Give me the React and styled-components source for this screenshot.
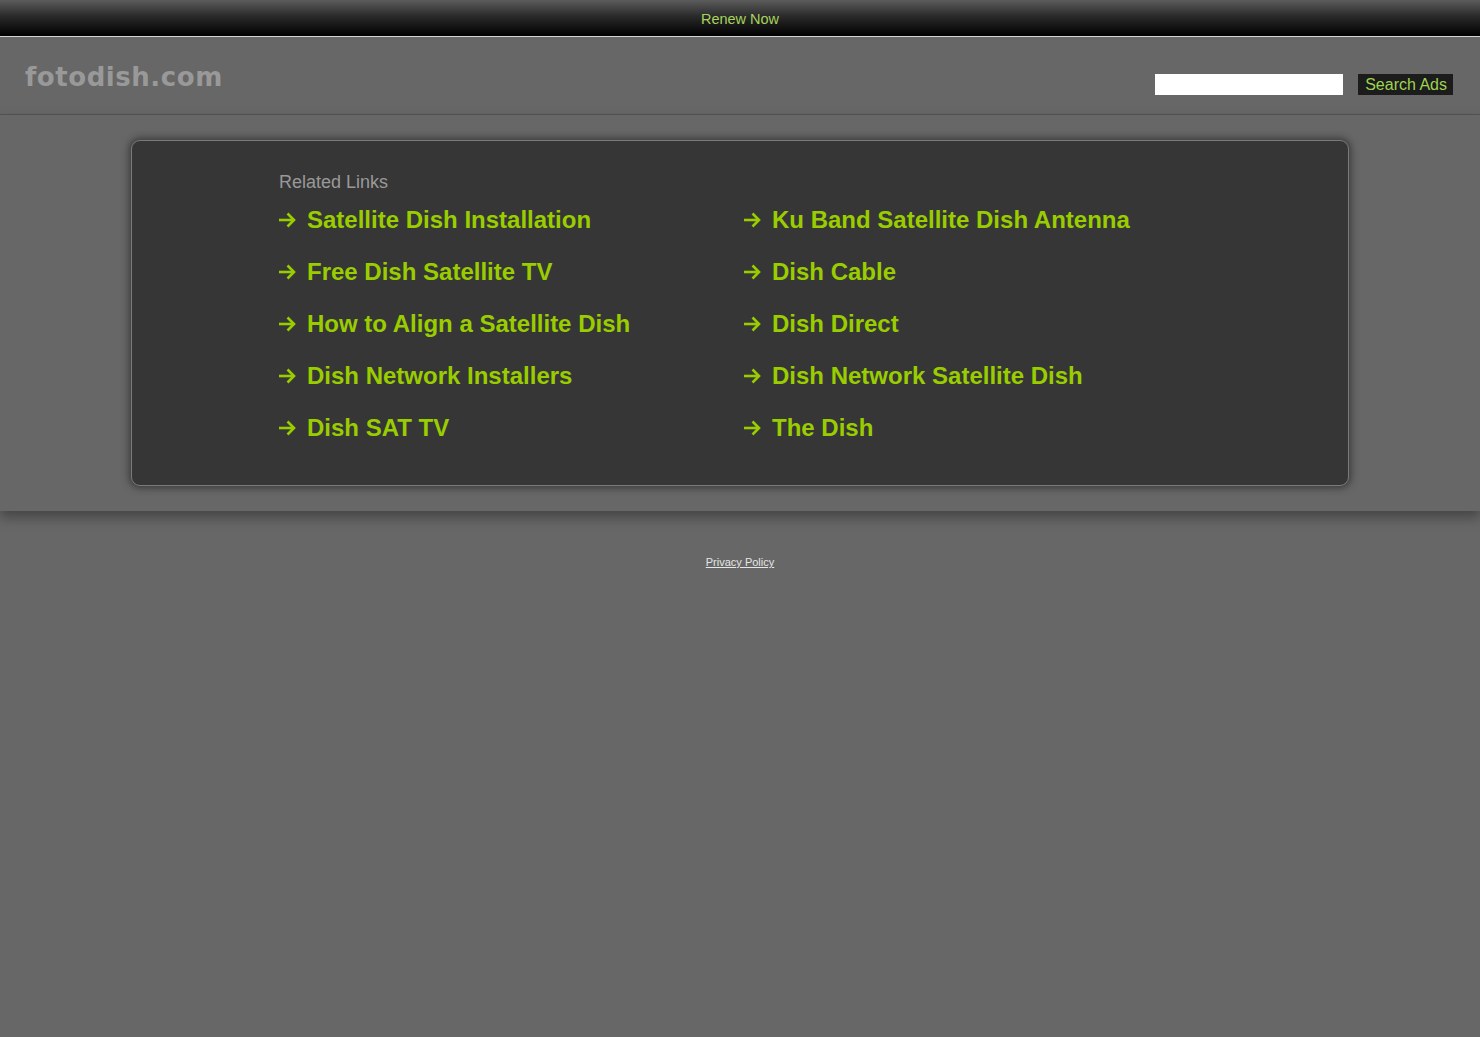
import styled, { createGlobalStyle } from 'styled-components'

const GlobalStyle = createGlobalStyle`
  html, body {
    margin: 0;
    padding: 0;
    background: #676767;
    font-family: "Liberation Sans", Arial, sans-serif;
  }
`

const TopBar = styled.div`
  height: 36px;
  border-bottom: 1px solid #d6d6d6;
  background: linear-gradient(to bottom, #5c5c5c 0%, #2a2a2a 45%, #000 100%);
  display: flex;
  align-items: center;
  justify-content: center;
  a {
    color: #a6d35c;
    font-size: 14.5px;
    text-decoration: none;
    padding-top: 1px;
  }
`

const Header = styled.div`
  height: 77px;
  border-bottom: 1px solid #555;
  background: #676767;
  display: flex;
  align-items: flex-start;
  justify-content: space-between;
  padding: 0 27px 0 25px;
`

const Logo = styled.div`
  font-family: "DejaVu Sans", Verdana, sans-serif;
  font-weight: bold;
  font-size: 26px;
  color: #999;
  margin-top: 25px;
  letter-spacing: 0.55px;
`

const SearchForm = styled.form`
  display: flex;
  align-items: center;
  gap: 15px;
  margin-top: 37px;
`

const SearchInput = styled.input`
  width: 188px;
  height: 21px;
  border: none;
  padding: 0;
  background: #fff;
  box-sizing: border-box;
`

const SearchButton = styled.button`
  height: 21px;
  padding: 0 6px 0 7px;
  border: none;
  background: #1c1c1c;
  color: #9fd352;
  font-family: "Liberation Sans", Arial, sans-serif;
  font-size: 16px;
  line-height: 21px;
  cursor: pointer;
`

const Main = styled.div`
  background: #676767;
  padding: 25px 0 25px;
  box-shadow: 0 6px 12px rgba(0, 0, 0, 0.35);
  position: relative;
`

const Panel = styled.div`
  width: 1218px;
  height: 346px;
  margin-left: 131px;
  box-sizing: border-box;
  background: #363636;
  border: 1px solid #7a7a7a;
  border-radius: 9px;
  box-shadow: 0 0 7px 2px rgba(40, 40, 40, 0.7);
  padding: 31px 0 0 147px;
`

const Heading = styled.div`
  color: #999;
  font-size: 18px;
  margin-bottom: 9px;
`

const LinkGrid = styled.div`
  display: grid;
  grid-template-columns: 465px 465px;
  grid-auto-rows: 52px;
`

const LinkItem = styled.a`
  display: flex;
  align-items: center;
  gap: 11px;
  height: 36px;
  color: #9acd00;
  font-size: 24px;
  font-weight: bold;
  text-decoration: none;
  white-space: nowrap;
`

const Arrow = styled.svg`
  width: 18px;
  height: 16px;
  flex-shrink: 0;
  margin-left: -1px;
`

const Footer = styled.div`
  text-align: center;
  padding-top: 41px;
  a {
    color: #e6e6e6;
    font-size: 11px;
    text-decoration: underline;
  }
`

const links = [
  'Satellite Dish Installation',
  'Ku Band Satellite Dish Antenna',
  'Free Dish Satellite TV',
  'Dish Cable',
  'How to Align a Satellite Dish',
  'Dish Direct',
  'Dish Network Installers',
  'Dish Network Satellite Dish',
  'Dish SAT TV',
  'The Dish',
]

export default function App() {
  return (
    <>
      <GlobalStyle />
      <TopBar>
        <a href="#">Renew Now</a>
      </TopBar>
      <Header>
        <Logo>fotodish.com</Logo>
        <SearchForm onSubmit={(e) => e.preventDefault()}>
          <SearchInput type="text" />
          <SearchButton type="submit">Search Ads</SearchButton>
        </SearchForm>
      </Header>
      <Main>
        <Panel>
          <Heading>Related Links</Heading>
          <LinkGrid>
            {links.map((text) => (
              <LinkItem href="#" key={text}>
                <Arrow viewBox="0 0 18 16" fill="none" stroke="currentColor" strokeWidth="2.6">
                  <path d="M1 8H16" />
                  <path d="M9.5 1.5L16 8L9.5 14.5" />
                </Arrow>
                {text}
              </LinkItem>
            ))}
          </LinkGrid>
        </Panel>
      </Main>
      <Footer>
        <a href="#">Privacy Policy</a>
      </Footer>
    </>
  )
}
